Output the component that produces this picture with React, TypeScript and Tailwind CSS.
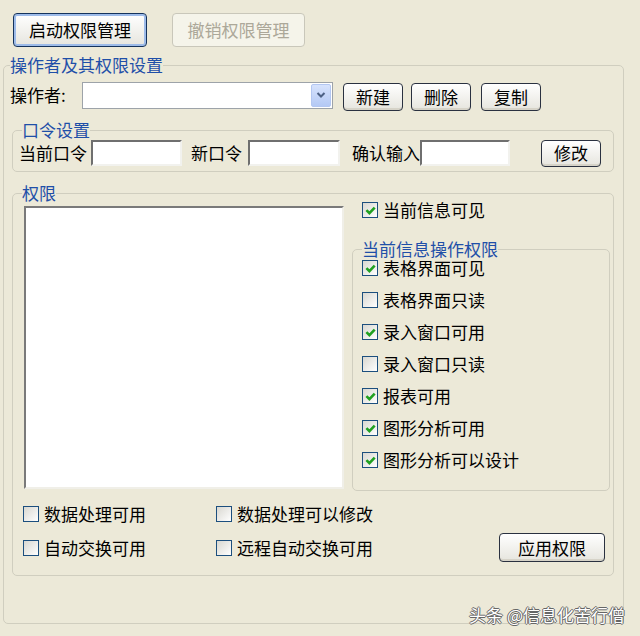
import React from 'react';

const FONT = '"Noto Sans CJK SC", "Noto Sans", sans-serif';

function XpButton({
  label,
  w,
  h,
  variant = 'normal',
  className = '',
}: {
  label: string;
  w: string;
  h: string;
  variant?: 'normal' | 'default' | 'disabled';
  className?: string;
}) {
  const look =
    variant === 'disabled'
      ? 'border-[#c9c7ba] text-[#aca899] bg-[#f5f4ea]'
      : variant === 'default'
      ? 'border-[#14325c] text-black bg-gradient-to-b from-white to-[#e6e5de] shadow-[inset_0_0_0_2px_#9dbbe9]'
      : 'border-[#2a3140] text-black bg-gradient-to-b from-white to-[#e6e5de] shadow-[inset_0_-2px_0_#d6d3c8]';
  return (
    <button
      className={`${w} ${h} ${look} ${className} flex shrink-0 items-center justify-center rounded-[4px] border text-[17px] leading-[20px]`}
    >
      {label}
    </button>
  );
}

function CheckBox({ checked }: { checked?: boolean }) {
  return (
    <span className="flex h-[16px] w-[16px] shrink-0 items-center justify-center border border-[#1c4f7e] bg-gradient-to-br from-[#d9d8d1] to-white">
      {checked && (
        <svg width="11" height="11" viewBox="0 0 10 10">
          <path d="M1.3 4.7 L4 7.4 L8.8 2.3" fill="none" stroke="#21a121" strokeWidth="2.4" />
        </svg>
      )}
    </span>
  );
}

function CheckRow({ label, checked, className = '' }: { label: string; checked?: boolean; className?: string }) {
  return (
    <div className={`flex items-center gap-[5px] ${className}`}>
      <CheckBox checked={checked} />
      <span className="text-[17px] leading-[18px] whitespace-nowrap">{label}</span>
    </div>
  );
}

function TextBox({ w }: { w: string }) {
  return (
    <div
      className={`${w} h-[26px] shrink-0 border-2 border-t-[#6f6f6f] border-l-[#6f6f6f] border-r-[#f2f2ee] border-b-[#f2f2ee] bg-white`}
    />
  );
}

const legendCls = 'text-[17px] leading-[20px] text-[#1f4fa8] px-0';
const groupCls = 'border border-[#d0cebf] rounded-[5px] p-0 m-0';

const opPerms: [string, boolean][] = [
  ['表格界面可见', true],
  ['表格界面只读', false],
  ['录入窗口可用', true],
  ['录入窗口只读', false],
  ['报表可用', true],
  ['图形分析可用', true],
  ['图形分析可以设计', true],
];

export default function App() {
  return (
    <div
      className="relative w-[640px] h-[636px] overflow-hidden bg-[#ece9d8] pt-[13px] text-black"
      style={{ fontFamily: FONT }}
    >
      {/* top toolbar */}
      <div className="flex gap-[25px] pl-[13px]">
        <XpButton label="启动权限管理" w="w-[134px]" h="h-[34px]" variant="default" />
        <XpButton label="撤销权限管理" w="w-[133px]" h="h-[34px]" variant="disabled" />
      </div>

      {/* operator & permissions */}
      <fieldset className={`${groupCls} mt-[8px] ml-[3px] w-[621px] h-[569px]`}>
        <legend className={`${legendCls} ml-[6px]`}>操作者及其权限设置</legend>

        <div className="mt-[5px] flex h-[30px] items-center">
          <span className="ml-[6px] w-[72px] text-[17px] leading-[20px]">操作者:</span>
          <div className="flex h-[27px] w-[251px] shrink-0 items-center justify-end border border-[#9da3a9] bg-white pr-[1px]">
            <div className="flex h-[23px] w-[20px] items-center justify-center rounded-[2px] border border-[#b3c7f2] bg-gradient-to-b from-[#d7e3fd] to-[#b4c9f5]">
              <svg width="10" height="8" viewBox="0 0 10 8">
                <path d="M1.5 2 L5 5.5 L8.5 2" fill="none" stroke="#4d6185" strokeWidth="2" />
              </svg>
            </div>
          </div>
          <XpButton label="新建" w="w-[60px]" h="h-[28px]" className="ml-[10px] mt-[4px]" />
          <XpButton label="删除" w="w-[60px]" h="h-[28px]" className="ml-[8px] mt-[4px]" />
          <XpButton label="复制" w="w-[60px]" h="h-[28px]" className="ml-[10px] mt-[4px]" />
        </div>

        {/* password */}
        <fieldset className={`${groupCls} mt-[10px] ml-[8px] w-[602px] pb-[5px]`}>
          <legend className={`${legendCls} ml-[9px]`}>口令设置</legend>
          <div className="flex h-[26px] items-center">
            <span className="ml-[6px] w-[72px] text-[17px] leading-[20px]">当前口令</span>
            <TextBox w="w-[91px]" />
            <span className="ml-[9px] w-[57px] text-[17px] leading-[20px]">新口令</span>
            <TextBox w="w-[92px]" />
            <span className="ml-[12px] w-[68px] text-[17px] leading-[20px] whitespace-nowrap">确认输入</span>
            <TextBox w="w-[90px]" />
            <XpButton label="修改" w="w-[60px]" h="h-[27px]" className="ml-[31px]" />
          </div>
        </fieldset>

        {/* permissions */}
        <fieldset className={`${groupCls} mt-[11px] ml-[8px] w-[602px] pb-[13px]`}>
          <legend className={`${legendCls} ml-[9px]`}>权限</legend>
          <div className="flex">
            <div className="mt-[3px] ml-[11px] h-[283px] w-[320px] shrink-0 border-2 border-t-[#7a7a7a] border-l-[#7a7a7a] border-r-[#f0efe8] border-b-[#f0efe8] bg-white" />
            <div className="-mt-[1px] ml-[8px] w-[258px]">
              <CheckRow label="当前信息可见" checked className="ml-[10px] h-[16px]" />
              <fieldset className={`${groupCls} mt-[22px] w-[258px] pb-[14px]`}>
                <legend className="ml-[9px] px-0 text-[17px] leading-[18px] text-[#1f4fa8]">当前信息操作权限</legend>
                <div className="-mt-[6px]">
                  {opPerms.map(([label, checked]) => (
                    <CheckRow key={label} label={label} checked={checked} className="ml-[9px] h-[32px]" />
                  ))}
                </div>
              </fieldset>
            </div>
          </div>

          <div className="mt-[14px] flex h-[18px] items-center">
            <CheckRow label="数据处理可用" className="ml-[10px] w-[193px]" />
            <CheckRow label="数据处理可以修改" />
          </div>
          <div className="mt-[10px] flex h-[29px] items-center">
            <CheckRow label="自动交换可用" className="ml-[10px] w-[193px]" />
            <CheckRow label="远程自动交换可用" />
            <XpButton label="应用权限" w="w-[106px]" h="h-[29px]" className="ml-auto mr-[8px]" />
          </div>
        </fieldset>
      </fieldset>

      {/* watermark */}
      <div className="absolute right-[15px] bottom-[11px] text-[17px] leading-[20px] text-white [text-shadow:1px_0_0_#666,-1px_0_0_#666,0_1px_0_#666,0_-1px_0_#666]">
        头条 @信息化苦行僧
      </div>
    </div>
  );
}
